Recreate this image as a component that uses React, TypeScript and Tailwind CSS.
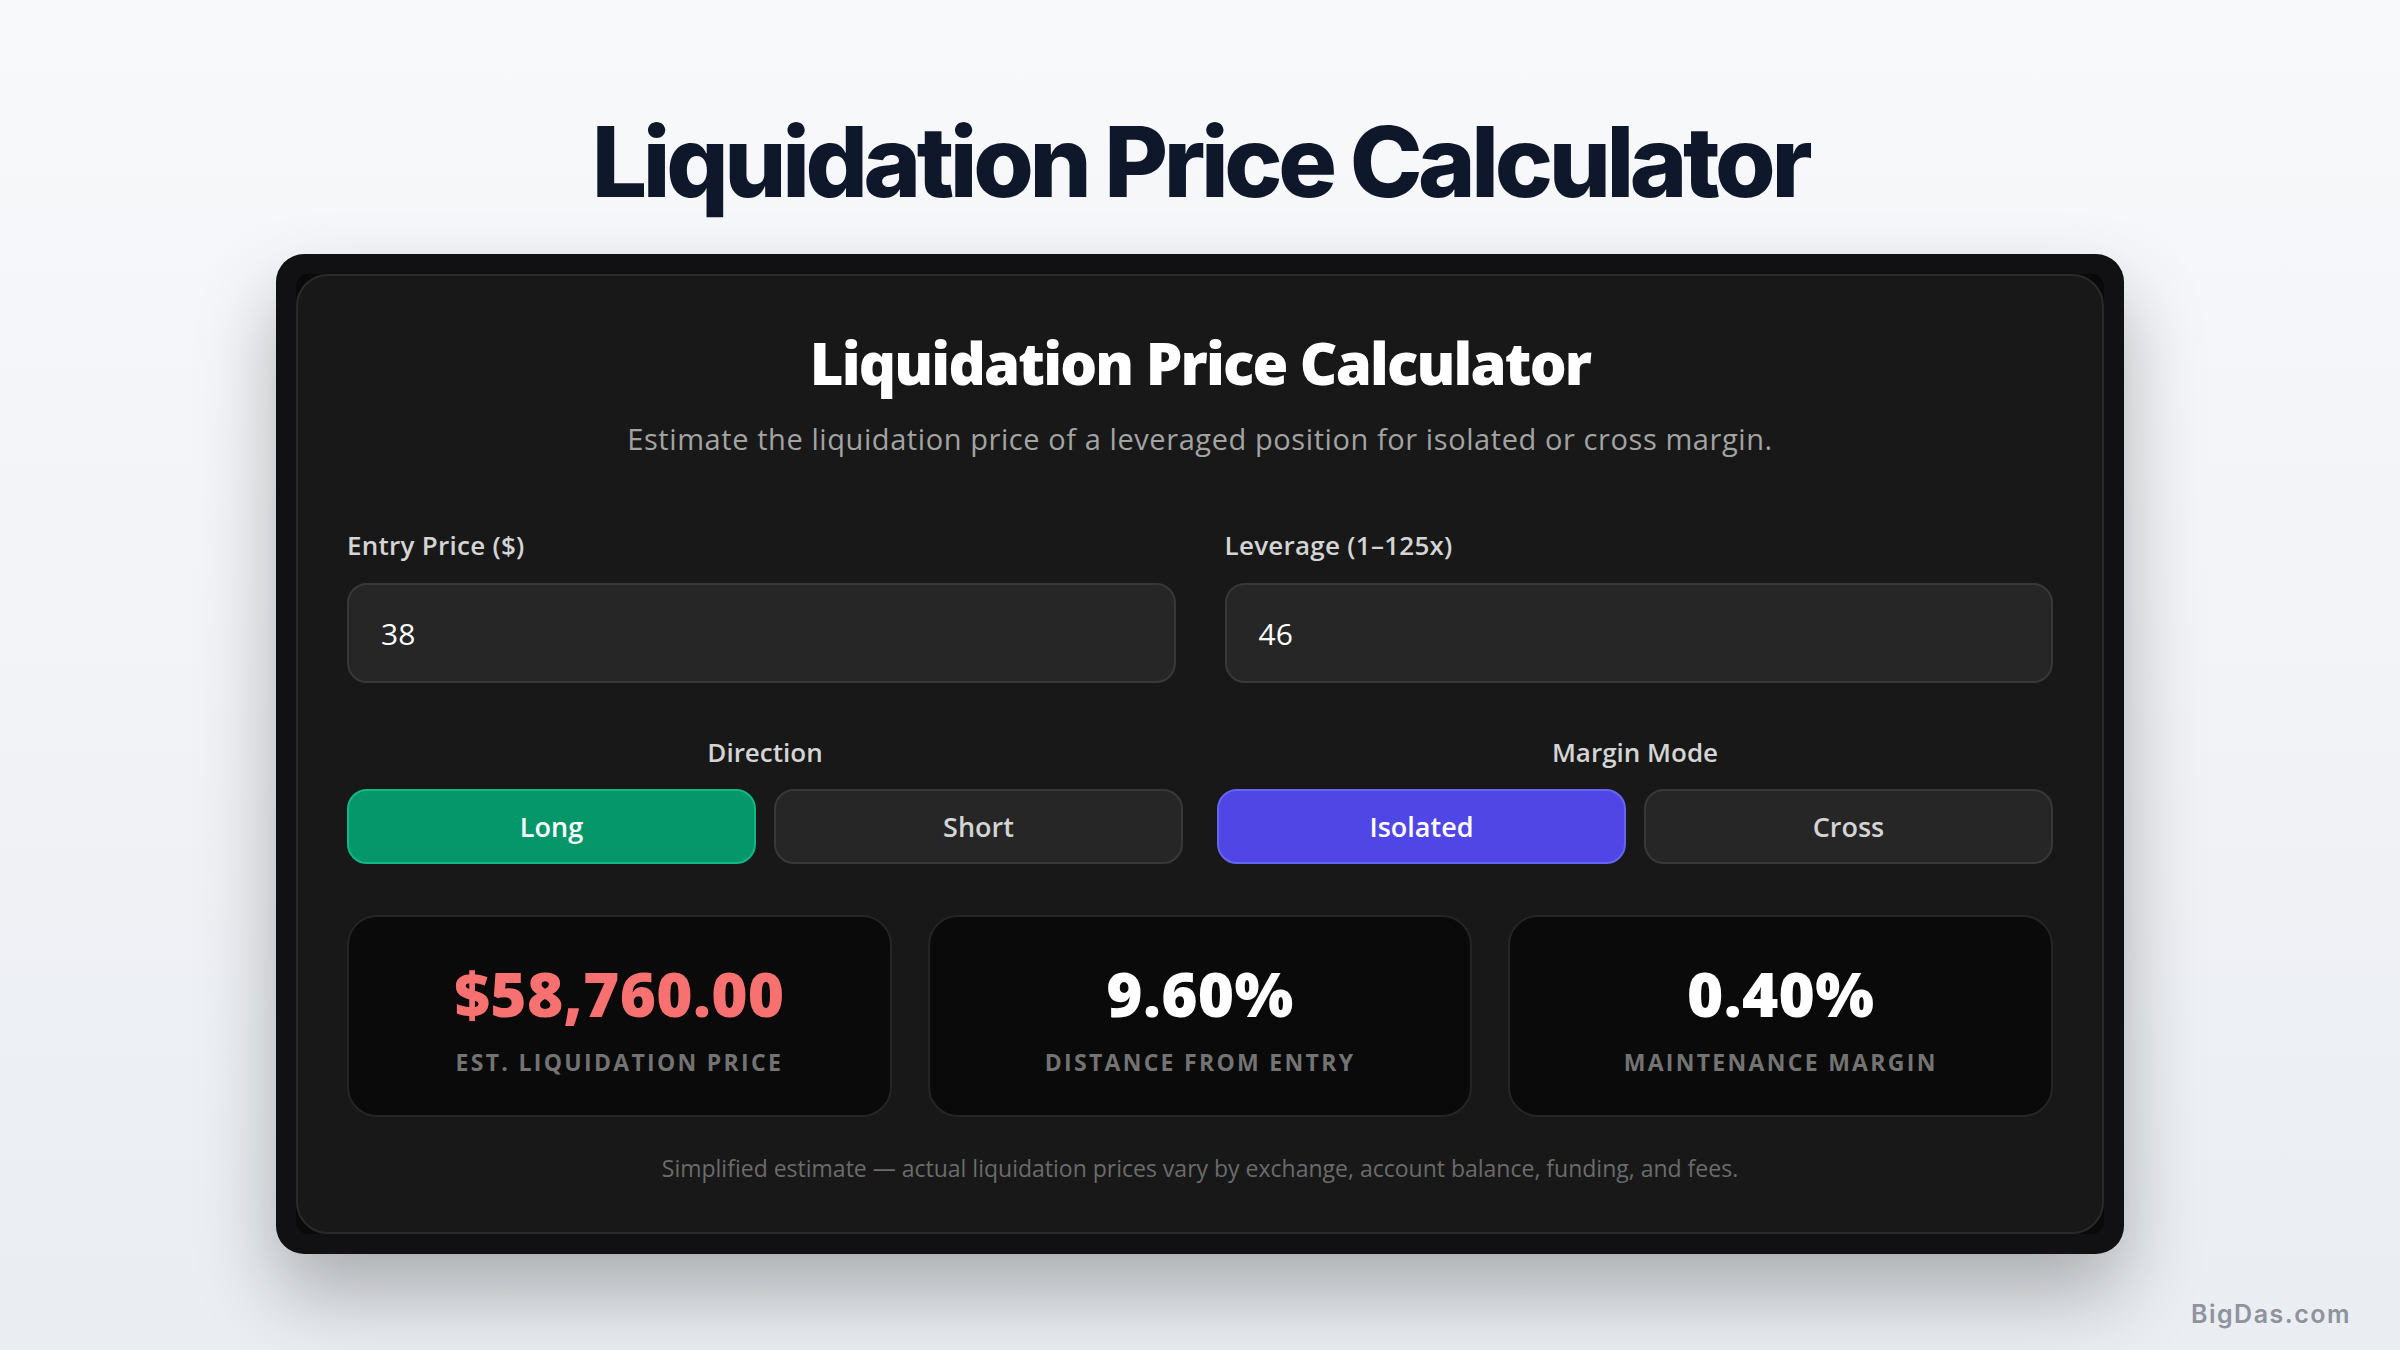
import React from "react";

function Toggle({ label, active, activeClass }: { label: string; active: boolean; activeClass: string }) {
  return (
    <button
      className={
        "h-[75px] rounded-[20px] border-2 text-[27px] font-semibold leading-none " +
        (active ? activeClass + " text-white" : "border-[#383838] bg-[#262626] text-[#d4d4d4]")
      }
    >
      {label}
    </button>
  );
}

function Stat({ value, label, valueClass }: { value: string; label: string; valueClass: string }) {
  return (
    <div className="flex h-[202px] flex-col items-center justify-center rounded-[30px] border-2 border-[#252525] bg-[#0a0a0a] pt-[4px]">
      <div className={"text-[62px] font-extrabold leading-[60px] tracking-[0.005em] " + valueClass}>{value}</div>
      <div className="mt-[28px] text-[23px] font-bold uppercase leading-[23px] tracking-[0.1em] text-[#737373]">{label}</div>
    </div>
  );
}

export default function App() {
  return (
    <div className="relative flex h-[1350px] w-full flex-col items-center overflow-hidden bg-gradient-to-b from-[#f8f9fb] to-[#eaedf2] font-['Open_Sans',sans-serif]">
      <h1 className="mt-[113px] font-['Inter',sans-serif] text-[98px] font-extrabold leading-none tracking-[-0.045em] text-[#0f172a]">
        Liquidation Price Calculator
      </h1>
      <div className="mt-[43px] w-[1848px] rounded-[28px] bg-[#111113] p-[20px] shadow-[0_40px_80px_rgba(0,0,0,0.28)]">
        <div className="rounded-[12px] bg-[#0a0a0a]">
          <div className="flex h-[960px] flex-col rounded-[32px] border-2 border-[#2a2a2a] bg-[#181818] px-[49px] pt-[58px]">
            <h2 className="text-center text-[58px] font-extrabold leading-[58px] tracking-[-0.031em] text-white">Liquidation Price Calculator</h2>
            <p className="mt-[33px] text-center text-[29px] leading-[28px] tracking-[0.02em] text-[#a3a3a3]">
              Estimate the liquidation price of a leveraged position for isolated or cross margin.
            </p>

            <div className="mt-[80px] grid grid-cols-2 gap-[49px]">
              <div className="flex flex-col">
                <label className="text-[26px] font-semibold leading-[25px] tracking-[0.01em] text-[#d4d4d4]">Entry Price ($)</label>
                <div className="mt-[25px] flex h-[100px] items-center rounded-[20px] border-2 border-[#383838] bg-[#262626] px-[32px] text-[30px] text-white">
                  38
                </div>
              </div>
              <div className="flex flex-col">
                <label className="text-[26px] font-semibold leading-[25px] tracking-[0.01em] text-[#d4d4d4]">Leverage (1–125x)</label>
                <div className="mt-[25px] flex h-[100px] items-center rounded-[20px] border-2 border-[#383838] bg-[#262626] px-[32px] text-[30px] text-white">
                  46
                </div>
              </div>
            </div>

            <div className="mt-[56px] grid grid-cols-2 gap-[34px]">
              <div className="flex flex-col">
                <div className="text-center text-[26px] font-semibold leading-[26px] text-[#d4d4d4]">Direction</div>
                <div className="mt-[24px] grid grid-cols-2 gap-[18px]">
                  <Toggle label="Long" active activeClass="border-[#10b981] bg-[#059669]" />
                  <Toggle label="Short" active={false} activeClass="" />
                </div>
              </div>
              <div className="flex flex-col">
                <div className="text-center text-[26px] font-semibold leading-[26px] text-[#d4d4d4]">Margin Mode</div>
                <div className="mt-[24px] grid grid-cols-2 gap-[18px]">
                  <Toggle label="Isolated" active activeClass="border-[#6366f1] bg-[#4f46e5]" />
                  <Toggle label="Cross" active={false} activeClass="" />
                </div>
              </div>
            </div>

            <div className="mt-[51px] grid grid-cols-3 gap-[36px]">
              <Stat value="$58,760.00" label="Est. Liquidation Price" valueClass="text-[#f87171]" />
              <Stat value="9.60%" label="Distance from Entry" valueClass="text-white" />
              <Stat value="0.40%" label="Maintenance Margin" valueClass="text-white" />
            </div>

            <p className="mt-[40px] text-center text-[23px] leading-[22px] text-[#6b6b6b]">
              Simplified estimate — actual liquidation prices vary by exchange, account balance, funding, and fees.
            </p>
          </div>
        </div>
      </div>
      <div className="absolute bottom-[17px] right-[49px] font-['Inter',sans-serif] text-[25px] font-semibold tracking-[0.06em] text-[#8e939c]">
        BigDas.com
      </div>
    </div>
  );
}
